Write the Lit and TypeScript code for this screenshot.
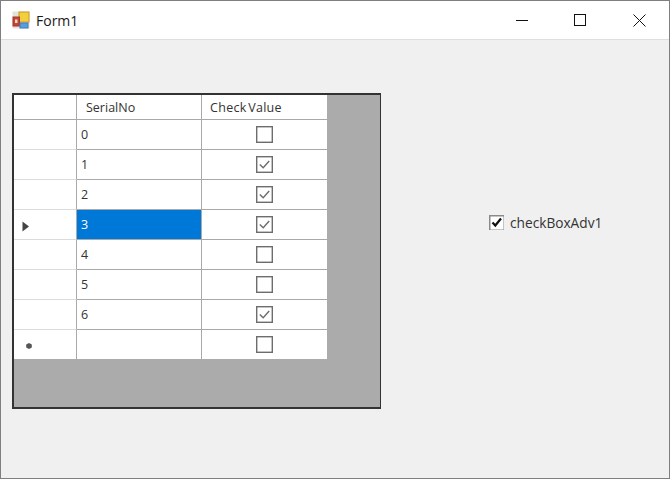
import { LitElement, html, css, svg } from "lit";
import { customElement } from "lit/decorators.js";

const rows: { n: string; c: boolean }[] = [
  { n: "0", c: false }, { n: "1", c: true }, { n: "2", c: true }, { n: "3", c: true },
  { n: "4", c: false }, { n: "5", c: false }, { n: "6", c: true }, { n: "", c: false },
];

@customElement("app-root")
export class AppRoot extends LitElement {
  static styles = css`
    :host { display: block; width: 670px; height: 479px; font-family: "Open Sans", "Liberation Sans", Arial, sans-serif; color: #333; }
    * { box-sizing: border-box; }
    .win { width: 670px; height: 479px; border: 1px solid #7f7f7f; background: #f0f0f0; display: flex; flex-direction: column; }
    .title { height: 39px; flex: none; background: #fff; border-bottom: 1px solid #dedede; display: flex; align-items: center; padding-left: 11px; }
    .title .logo { width: 18px; height: 18px; margin-right: 6px; flex: none; }
    .title .name { font-size: 14px; color: #1a1a1a; flex: 1; }
    .btn { width: 58px; height: 38px; display: flex; align-items: center; justify-content: center; flex: none; }
    .btn.max { margin-right: 1px; }
    .btn.close { margin-right: 1px; }
    .body { flex: 1; display: flex; padding: 53px 0 0 11px; align-items: flex-start; }
    .dgv { width: 369px; height: 316px; border: 1px solid #333; border-left-width: 2px; border-top-width: 2px; border-bottom-width: 2px; background: #ababab; flex: none; }
    .grid { display: grid; grid-template-columns: 63px 125px 125px; grid-auto-rows: 30px; width: 313px; }
    .grid > div { display: flex; align-items: center; font-size: 12.5px; background: #fff; border-right: 1px solid #a9a9a9; border-bottom: 1px solid #a9a9a9; }
    .grid > .rh { border-bottom-color: #dcdcdc; padding-left: 8px; }
    .grid > .cell { padding-left: 4px; }
    .grid > .cell.sel { background: #0078d7; color: #fff; }
    .grid > .chk { justify-content: center; border-right: none; }
    .grid > .last { background: #fff; border-bottom-color: #ababab; }
    .header { display: grid; grid-template-columns: 63px 125px 125px; width: 313px; height: 25px; background: #fff; }
    .header > div { display: flex; align-items: center; font-size: 12.5px; padding-left: 9px; border-right: 1px solid #a9a9a9; border-bottom: 1px solid #a9a9a9; }
    .header > .end { border-right: none; padding-left: 8px; letter-spacing: 0.3px; word-spacing: -2px; }
    .box { width: 17px; height: 17px; display: block; }
    .arrow { margin-top: 3px; }
    .star { margin-top: 3px; margin-left: 3px; }
    .rside { margin: 120px 0 0 108px; display: flex; align-items: center; gap: 6px; font-size: 13.7px; }
    .cb { width: 15px; height: 15px; display: block; flex: none; }
  `;

  private check(c: boolean) {
    return html`<svg class="box" viewBox="0 0 17 17">
      <rect x="0.7" y="0.7" width="15.6" height="15.6" fill="#fff" stroke="#6d6d6d" stroke-width="1.4"/>
      ${c ? svg`<path d="M3.8 8.4 L7.2 11.8 L13.2 5" fill="none" stroke="#6d6d6d" stroke-width="1.4"/>` : ""}
    </svg>`;
  }

  render() {
    return html`<div class="win">
      <div class="title">
        <svg class="logo" viewBox="0 0 18 18">
          <rect x="0.5" y="0.5" width="17" height="17" fill="#e6e1d8"/>
          <rect x="7" y="1" width="10" height="10" fill="#f4cf3d" stroke="#c49a28"/>
          <rect x="1" y="6" width="6.5" height="9" fill="#c8432f" stroke="#9d3b30"/>
          <rect x="3" y="8.5" width="2.5" height="3.5" fill="#f1d9d0"/>
          <rect x="8" y="12" width="8" height="5" fill="#5a9ce0" stroke="#3f7cbf"/>
        </svg>
        <span class="name">Form1</span>
        <div class="btn"><svg width="12" height="12" viewBox="0 0 12 12"><path d="M0 6.5H12" stroke="#111" stroke-width="1"/></svg></div>
        <div class="btn max"><svg width="12" height="12" viewBox="0 0 12 12"><rect x="0.5" y="0.5" width="11" height="11" fill="none" stroke="#111"/></svg></div>
        <div class="btn close"><svg width="13" height="13" viewBox="0 0 13 13"><path d="M0.5 0.5L12.5 12.5M12.5 0.5L0.5 12.5" stroke="#111" stroke-width="1"/></svg></div>
      </div>
      <div class="body">
        <div class="dgv">
          <div class="header"><div></div><div>SerialNo</div><div class="end">Check Value</div></div>
          <div class="grid">
            ${rows.map((r, i) => {
              const last = i === rows.length - 1 ? "last" : "";
              return html`
                <div class="rh ${last}">
                  ${i === 3 ? html`<svg class="arrow" width="8" height="11" viewBox="0 0 8 11"><path d="M0.5 0.5V10.5L7 5.5Z" fill="#444"/></svg>` : ""}
                  ${last ? html`<svg class="star" width="8" height="8" viewBox="0 0 8 8"><path d="M4 1L6.8 2.6V5.4L4 7L1.2 5.4V2.6Z" fill="#555"/></svg>` : ""}
                </div>
                <div class="cell ${i === 3 ? "sel" : ""} ${last}">${r.n}</div>
                <div class="chk ${last}">${this.check(r.c)}</div>`;
            })}
          </div>
        </div>
        <div class="rside">
          <svg class="cb" viewBox="0 0 15 15">
            <rect x="0" y="0" width="15" height="15" fill="#8a8a8a"/>
            <rect x="1.5" y="1.5" width="13" height="13" fill="#fff"/>
            <path d="M3.5 7.5L6.3 10.5L12 3.5" fill="none" stroke="#111" stroke-width="2.2"/>
          </svg>
          <span>checkBoxAdv1</span>
        </div>
      </div>
    </div>`;
  }
}
